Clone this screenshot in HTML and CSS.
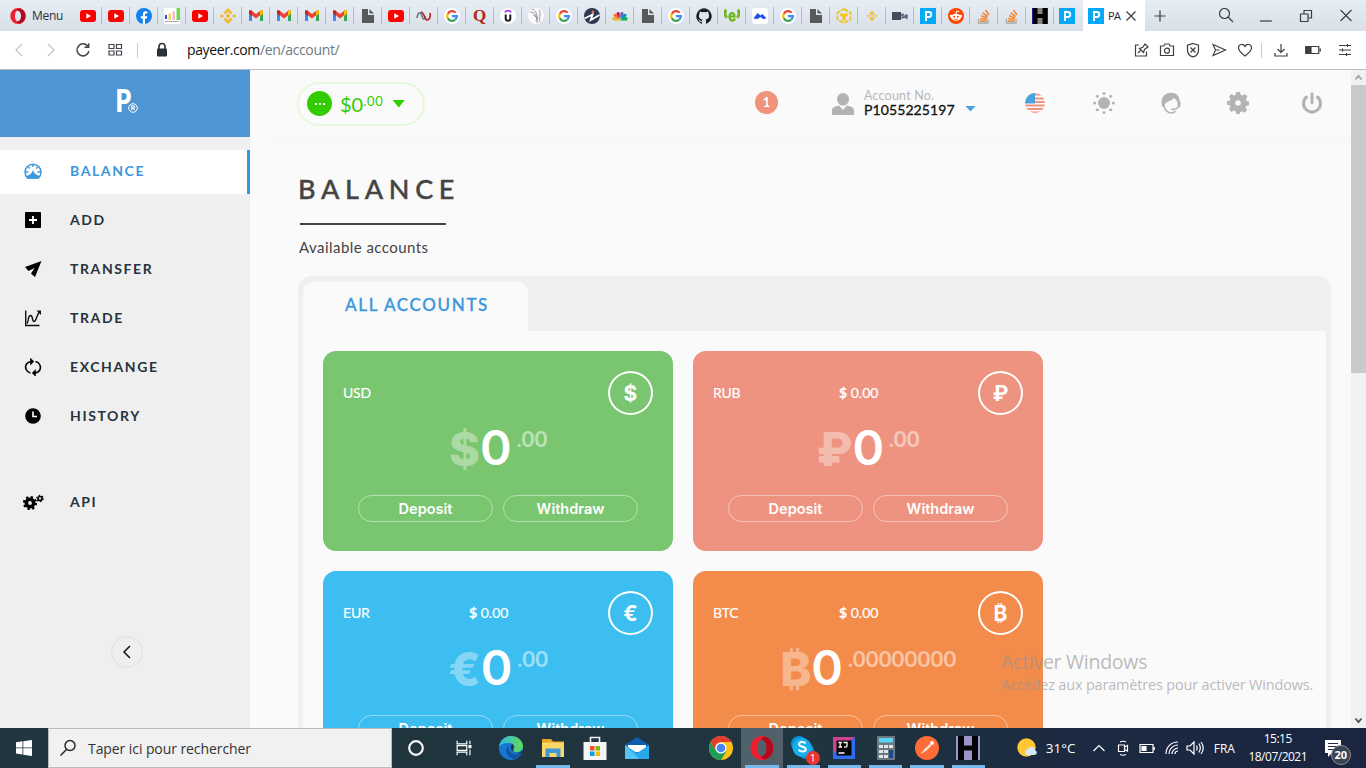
FILE: index.html
```html
<!DOCTYPE html>
<html lang="en">
<head>
<meta charset="utf-8">
<title>Payeer</title>
<link rel="stylesheet" href="styles.css">
</head>
<body>
<svg class="sprite" width="0" height="0">
  <symbol id="yt" viewBox="0 0 16 16"><rect y="2" width="16" height="12" rx="3" fill="#f00"/><path d="M6.3 5.2v5.6L11 8z" fill="#fff"/></symbol>
  <symbol id="fb" viewBox="0 0 16 16"><circle cx="8" cy="8" r="8" fill="#1082ee"/><path d="M6.8 16v-5.500H4.800V8.200h2V6.500c0-2.200 1.200-3.200 3-3.200l1.600.1v2h-1.100c-1 0-1.300.5-1.300 1.200v1.600h2.300l-.4 2.300H9V16z" fill="#fff"/></symbol>
  <symbol id="chart" viewBox="0 0 16 16"><rect width="16" height="16" fill="#fff"/><path d="M1 7h2v4H1z" fill="#234fd0"/><path d="M4.500 5.500H7V12H4.500z" fill="#fbd35b"/><path d="M8.500 3.500H11V12H8.500z" fill="#f2bac8"/><path d="M12.500 0H16v12h-3.500z" fill="#72d94c"/><path d="M1 13.500h14" stroke="#8c86bd" stroke-dasharray="1.500 .5"/></symbol>
  <symbol id="bnb" viewBox="0 0 16 16"><g fill="#f3ba2f"><path d="M8 0l4.500 4.500-1.900 1.900L8 3.800 5.400 6.400 3.500 4.500zM8 16l4.500-4.500-1.900-1.900L8 12.200 5.400 9.600l-1.900 1.900zM2 6l2 2-2 2-2-2zM14 6l2 2-2 2-2-2zM8 5.600L10.400 8 8 10.400 5.600 8z"/></g></symbol>
  <symbol id="gm" viewBox="0 0 16 16"><path d="M1 3.500V13h3V7z" fill="#4285f4"/><path d="M15 3.500V13h-3V7z" fill="#34a853"/><path d="M1 5V3.500C1 2 3 2 4 3l4 3 4-3c1-1 3-1 3 .5V5l-7 5.500z" fill="#ea4335"/><path d="M12 3c1-1 3-1 3 .5V5.500L12 8z" fill="#fbbc04"/><path d="M1 3.500C1 2 3 2 4 3v5L1 5.500z" fill="#c5221f"/></symbol>
  <symbol id="doc" viewBox="0 0 16 16"><path d="M2 1h6v6h6v8H2z" fill="#58595b"/><path d="M9.500 1L14 5.500H9.500z" fill="#58595b"/></symbol>
  <symbol id="gg" viewBox="0 0 16 16"><circle cx="8" cy="8" r="8" fill="#fff"/><g fill="none" stroke-width="2.300"><path d="M11.600 4.700A4.900 4.900 0 0 0 3.700 5.700" stroke="#ea4335"/><path d="M3.700 5.700a4.900 4.900 0 0 0 0 4.600" stroke="#fbbc05"/><path d="M3.700 10.300a4.900 4.900 0 0 0 7.700 1.200" stroke="#34a853"/><path d="M11.400 11.500A4.800 4.800 0 0 0 12.900 8.200H8" stroke="#4285f4"/></g></symbol>
  <symbol id="pp" viewBox="0 0 16 16"><rect width="16" height="16" fill="#04a8f5"/><path d="M6 13V4h2.800a2.500 2.500 0 0 1 0 5H6" fill="none" stroke="#fff" stroke-width="1.900"/></symbol>
  <symbol id="so" viewBox="0 0 16 16"><path d="M2.500 11v4h9.500v-4" fill="none" stroke="#aaa" stroke-width="1.300"/><path d="M4 13h6.500M4.200 10.500l6.400.9M5 7.700l6 2.300M6.700 4.900l5 3.700M9.500 2l3.500 5" stroke="#f48024" stroke-width="1.400"/></symbol>
  <symbol id="hh" viewBox="0 0 16 16"><rect width="16" height="16" fill="#000"/><path d="M5.500 0h5v6h-5zM5.500 10h5v6h-5z" fill="#858585"/><path d="M.5 0v16M15.500 0v16" stroke="#1c1c80"/></symbol>
  <symbol id="op" viewBox="0 0 24 24"><path fill-rule="evenodd" d="M12 0a11.500 12 0 1 0 0 24 11.500 12 0 0 0 0-24zm0 3.800c3 0 4.600 3.500 4.600 8.200S15 20.200 12 20.200 7.400 16.700 7.400 12 9 3.800 12 3.800z" fill="#f01c30"/><path d="M15.500 .8c10.500 3.700 10.500 18.700 0 22.400-2 .6-4-.8-4.500-3.200 7.500 1 7.500-17 0-16 .5-2.400 2.500-3.800 4.500-3.200z" fill="#b20a1c"/></symbol>
</svg>

<header class="tabs">
  <div class="menu"><svg width="16" height="16"><use href="#op"/></svg><span>Menu</span></div>
  <div class="tab"><svg><use href="#yt"/></svg></div>
  <div class="tab"><svg><use href="#yt"/></svg></div>
  <div class="tab"><svg><use href="#fb"/></svg></div>
  <div class="tab"><svg><use href="#chart"/></svg></div>
  <div class="tab"><svg><use href="#yt"/></svg></div>
  <div class="tab"><svg><use href="#bnb"/></svg></div>
  <div class="tab"><svg><use href="#gm"/></svg></div>
  <div class="tab"><svg><use href="#gm"/></svg></div>
  <div class="tab"><svg><use href="#gm"/></svg></div>
  <div class="tab"><svg><use href="#gm"/></svg></div>
  <div class="tab"><svg><use href="#doc"/></svg></div>
  <div class="tab"><svg><use href="#yt"/></svg></div>
  <div class="tab"><svg viewBox="0 0 16 16" fill="none" stroke-width="1.700"><path d="M1 10c1-7 4-6 5-2s3 4 3 0" stroke="#777"/><path d="M5 4c3 0 4 8 6 8s4-3 3-7" stroke="#ad2b2b"/></svg></div>
  <div class="tab"><svg><use href="#gg"/></svg></div>
  <div class="tab"><span class="glyph quora">Q</span></div>
  <div class="tab"><svg viewBox="0 0 16 16" fill="none"><circle cx="8" cy="8" r="8" fill="#fff"/><path d="M5 4.500C6 2 10 2 11 4.500" stroke="#a435f0" stroke-width="1.700"/><path d="M5.700 6.500v4.200c0 2.600 4.600 2.600 4.600 0V6.500" stroke="#1c1d1f" stroke-width="2"/></svg></div>
  <div class="tab"><svg viewBox="0 0 16 16" fill="none" stroke="#999"><circle cx="8" cy="8" r="8" fill="#fafafa" stroke="none"/><path d="M4 1c4 2 6 5 5 14M2 4c5 0 8 5 6 9M11 2c3 5-1 8 1 12M5 7l5 3"/></svg></div>
  <div class="tab"><svg><use href="#gg"/></svg></div>
  <div class="tab"><svg viewBox="0 0 16 16"><circle cx="8" cy="8" r="8" fill="#303750"/><path d="M.5 10.500L8.500 6.500 6.800 12 15.500 7" fill="none" stroke="#fff" stroke-width="1.900"/><circle cx="8.800" cy="3.700" r="1.300" fill="#f47c5b"/></svg></div>
  <div class="tab"><svg viewBox="0 0 16 16"><path d="M8 12.500H1C-1 9 3 7 8 12.500z" fill="#f5b21a"/><path d="M7.500 11.500L1.500 8C1 5 5 4 7.500 11.500z" fill="#f37021"/><path d="M7.700 11L4.500 6c0-3 3.500-2.500 3.200 0z" fill="#cc0f4b"/><path d="M8.300 11V6c0-2.500 3.500-3 3.200 0z" fill="#6460aa"/><path d="M8.500 11.500C11 4 15 5 14.500 8z" fill="#0089d0"/><path d="M8 12.500c5-5.500 9-3.500 7 0z" fill="#0db14b"/></svg></div>
  <div class="tab"><svg><use href="#doc"/></svg></div>
  <div class="tab"><svg><use href="#gg"/></svg></div>
  <div class="tab"><svg viewBox="0 0 16 16"><path d="M8 .2a8 8 0 0 0-2.500 15.500c.4.100.5-.2.500-.4v-1.500c-2.300.500-2.700-.9-2.700-.9-.3-.9-.9-1.200-.9-1.200-.7-.5.100-.5.100-.5.800.1 1.200.8 1.200.8.700 1.300 1.900.9 2.300.7.100-.5.300-.9.500-1.100-1.800-.2-3.600-.9-3.600-4 0-.9.300-1.600.8-2.100-.1-.2-.4-1 .1-2.100 0 0 .7-.2 2.200.8a7.500 7.500 0 0 1 4 0c1.500-1 2.200-.8 2.200-.8.500 1.100.2 1.900.1 2.100.5.600.8 1.300.8 2.100 0 3.100-1.900 3.800-3.700 4 .3.300.6.800.6 1.500v2.200c0 .2.100.5.500.4A8 8 0 0 0 8 .2z" fill="#1b1f23"/></svg></div>
  <div class="tab"><svg viewBox="0 0 16 16" fill="none" stroke="#6cb518"><path d="M5.500 8.500h5c0-4.500-5-4.500-5 0s4 5.500 5.500 2" stroke-width="2.200"/><path d="M2.500 2C0 3.500 .5 8 3 9.500M13.500 2c2.500 1.500 2 6-.5 7.500" stroke-width="2.800"/></svg></div>
  <div class="tab"><svg viewBox="0 0 16 16"><rect width="16" height="16" rx="3" fill="#fff"/><path d="M1.500 10.500L5.500 5 8.500 7.500 10.500 6l4 4.500-3.500 .5L8.500 9l-3 2z" fill="#1652f0"/></svg></div>
  <div class="tab"><svg><use href="#gg"/></svg></div>
  <div class="tab"><svg><use href="#doc"/></svg></div>
  <div class="tab"><svg viewBox="0 0 16 16" fill="none" stroke="#f5c21e"><path d="M8 1l6.500 3.500v7L8 15l-6.500-3.500v-7z" stroke-width="1.800" stroke-dasharray="4.500 1.200"/><path d="M4.500 6L8 8l3.500-2M8 8v4.500" stroke-width="3"/></svg></div>
  <div class="tab"><svg viewBox="-4 -4 24 24"><use href="#bnb" width="16" height="16"/></svg></div>
  <div class="tab"><svg viewBox="0 0 16 16"><rect y="4" width="9" height="8" fill="#474b5e"/><path d="M12 6.500c-3-1-3 1-1 1.500s1 2.500-2 1.500M13 8.500h2.500c0-2-2.500-2-2.500 0s2 2 2.500 1" fill="none" stroke="#666b7a" stroke-width="1.500"/></svg></div>
  <div class="tab"><svg><use href="#pp"/></svg></div>
  <div class="tab"><svg viewBox="0 0 16 16"><circle cx="8" cy="8" r="8" fill="#ff4500"/><ellipse cx="8" cy="9.300" rx="5" ry="3.500" fill="#fff"/><circle cx="3.200" cy="8" r="1.300" fill="#fff"/><circle cx="12.800" cy="8" r="1.300" fill="#fff"/><path d="M8 6l.7-3 2.500.6" fill="none" stroke="#fff"/><circle cx="6.200" cy="8.700" r="1" fill="#ff4500"/><circle cx="9.800" cy="8.700" r="1" fill="#ff4500"/><path d="M6 10.800c1 1 3 1 4 0" fill="none" stroke="#ff4500" stroke-width=".8"/></svg></div>
  <div class="tab"><svg><use href="#so"/></svg></div>
  <div class="tab"><svg><use href="#so"/></svg></div>
  <div class="tab"><svg><use href="#hh"/></svg></div>
  <div class="tab last"><svg><use href="#pp"/></svg></div>
  <div class="tab active"><svg><use href="#pp"/></svg><span class="tabname">PA</span><svg class="x" viewBox="0 0 16 16"><path d="M3.500 3.500l9 9M12.500 3.500l-9 9" stroke="#3c4043" stroke-width="1.300"/></svg></div>
  <svg class="plus" viewBox="0 0 16 16"><path d="M8 2.500v11M2.500 8h11" stroke="#3c4043" stroke-width="1.200"/></svg>
  <div class="winctl">
    <svg viewBox="0 0 16 16" fill="none" stroke="#3c4043" stroke-width="1.200"><circle cx="6.500" cy="5.500" r="5"/><path d="M10 9l5 5"/></svg>
    <svg viewBox="0 0 16 16"><path d="M2 13h12" stroke="#3c4043" stroke-width="1.200"/></svg>
    <svg viewBox="0 0 16 16" fill="none" stroke="#3c4043" stroke-width="1.200"><path d="M2.500 6h7.500v7.500H2.500zM6 6V2.500h7.500V10H10"/></svg>
    <svg viewBox="0 0 16 16"><path d="M2.500 2l11 11M13.500 2l-11 11" stroke="#3c4043" stroke-width="1.200"/></svg>
  </div>
</header>

<nav class="toolbar">
  <div class="navicons">
    <svg viewBox="0 0 16 16" fill="none" stroke="#c4c6c9" stroke-width="1.300"><path d="M11 2L5 8l6 6"/></svg>
    <svg viewBox="0 0 16 16" fill="none" stroke="#c4c6c9" stroke-width="1.300"><path d="M5 2l6 6-6 6"/></svg>
    <svg viewBox="0 0 16 16" fill="none" stroke="#41464d" stroke-width="1.500"><path d="M13 4.500a6 6 0 1 0 .9 4.500M13.700 1.200v4H9.500"/></svg>
    <svg viewBox="0 0 16 16" fill="none" stroke="#41464d" stroke-width="1.200"><path d="M2 2.500h5v4H2zM9.500 2.500h5v4h-5zM2 9h5v4H2zM9.500 9h5v4h-5z"/></svg>
  </div>
  <i class="rule"></i>
  <svg class="lock" viewBox="0 0 16 16"><rect x="3" y="6.500" width="10" height="8" rx="1" fill="#28323a"/><path d="M5 7V4.500a3 3 0 0 1 6 0V7" fill="none" stroke="#28323a" stroke-width="1.600"/></svg>
  <div class="url">payeer.com<span>/en/account/</span></div>
  <div class="tools">
    <svg viewBox="0 0 16 16"><path d="M6 3H2.500v11h11V9.500M5 11l3-3M6 6l5 5M7 6.500l3-1.500 2-3 3 3-3 2-1.500 3"/></svg>
    <svg viewBox="0 0 16 16"><path d="M1.500 4h3.300L6 2h4l1.200 2h3.300v9.500h-13z"/><circle cx="8" cy="8.700" r="2.500"/></svg>
    <svg viewBox="0 0 16 16"><path d="M8 1.500l5.500 1.700v5C13.500 11.500 11 14 8 14.800 5 14 2.500 11.500 2.500 8.200v-5zM5.500 5.500l5 5M10.500 5.500l-5 5"/></svg>
    <svg viewBox="0 0 16 16"><path d="M2 2.500L14.500 8 2 13.500 4.500 8zM4.500 8h4"/></svg>
    <svg viewBox="0 0 16 16"><path d="M8 14C4 11 1.500 8.500 1.500 5.700 1.500 2 6.500 1.200 8 4.500c1.500-3.300 6.500-2.500 6.500 1.200C14.500 8.500 12 11 8 14z"/></svg>
    <i class="rule"></i>
    <svg viewBox="0 0 16 16"><path d="M8 2v8.500M4.500 7L8 10.500 11.500 7M2 11v3h12v-3"/></svg>
    <svg viewBox="0 0 16 16"><path d="M.8 4.500h13v7H.8zM15.300 6.500v3"/><path d="M1 5h5v6H1z" fill="#3c4043"/></svg>
    <svg viewBox="0 0 16 16"><path d="M2 3.500h12M2 8h12M2 12.500h12M10.500 2v3M5.500 6.500v3M9.500 11v3"/></svg>
  </div>
</nav>

<div class="page">
  <aside class="side">
    <div class="logo"><span>P</span><svg width="10" height="10" viewBox="0 0 10 10" fill="none" stroke="#fff"><circle cx="5" cy="5" r="4.300" stroke-width="1"/><path d="M3.800 7.300V2.800h1.700a1.100 1.100 0 0 1 0 2.300H3.800M5.500 5.100l1 2.200" stroke-width="1.100"/></svg></div>
    <ul class="nav">
      <li class="on"><svg viewBox="0 0 18 18" fill="none" stroke="#3c97dc"><path d="M3.500 16a8 8 0 1 1 11 0z" stroke-width="1.500"/><path d="M2.500 14c3-1.500 4.500-1 6.500-6 2 5 3.500 4.500 6.500 6l-1 2.500h-11z" fill="#3c97dc" stroke="none"/><path d="M2 10h2.500M13.500 10H16M4.300 5l1.500 1.500M13.700 5l-1.500 1.500M9 2.500V5" stroke-width="1.500"/></svg><span>BALANCE</span></li>
      <li><svg viewBox="0 0 18 18"><rect x="1" y="1" width="16" height="16" rx="1" fill="#000"/><path d="M9 5v8M5 9h8" stroke="#fff" stroke-width="1.800"/></svg><span>ADD</span></li>
      <li><svg viewBox="0 0 18 18"><path d="M17.500 1L1 7l3.500 4 6-3-3.500 5.500 4 3.500z"/></svg><span>TRANSFER</span></li>
      <li><svg viewBox="0 0 18 18" fill="none" stroke="#111" stroke-width="1.400"><path d="M1.700 1.500v15H15.500M3 14.500c2-2 .5-8 3.500-8s1 6 3.500 6 2-5.500 5.500-9.500"/><path d="M12.500 1.500H17V6z" fill="#111" stroke="none"/></svg><span>TRADE</span></li>
      <li><svg viewBox="0 0 18 18" fill="none" stroke="#000" stroke-width="1.600"><path d="M6.500 15A6 6 0 0 1 2.500 6c1-1.700 2.500-2.300 5-2.500M11.500 3.500a6 6 0 0 1 4 9c-1 1.700-2.500 2.300-5 2.500"/><path d="M7 1.500l2 2-2 2zM11 13l-2 2 2 2z" fill="#000"/></svg><span>EXCHANGE</span></li>
      <li><svg viewBox="0 0 18 18"><circle cx="9" cy="9" r="7.800"/><path d="M9 4.500V9.500h4" fill="none" stroke="#fff" stroke-width="1.600"/></svg><span>HISTORY</span></li>
      <li class="api"><svg class="wide" viewBox="0 0 22 18" fill="none" stroke="#000"><circle cx="8" cy="10" r="3.700" stroke-width="3.600"/><circle cx="8" cy="10" r="6" stroke-width="2.200" stroke-dasharray="2.300 2.410"/><circle cx="18" cy="5.500" r="2" stroke-width="1.700"/><circle cx="18" cy="5.500" r="3.200" stroke-width="1.200" stroke-dasharray="1.500 1.850"/></svg><span>API</span></li>
    </ul>
    <button class="fold"><svg width="14" height="14" viewBox="0 0 14 14" fill="none" stroke="#111" stroke-width="1.500"><path d="M10 1L4 7l6 6"/></svg></button>
  </aside>

  <main class="main">
    <div class="top">
      <div class="pill"><i class="dots"><b></b><b></b><b></b></i><span class="amt">$0</span><span class="cents">.00</span><i class="tri"></i></div>
      <div class="note">1</div>
      <svg class="user" viewBox="0 0 22 22" fill="#b3b3b3"><ellipse cx="11" cy="6.300" rx="6" ry="6.300"/><path d="M0 22v-5c0-2.500 3-3.500 7-4.500l4 4.500 4-4.500c4 1 7 2 7 4.500v5z"/></svg>
      <div class="acct"><small>Account No.</small><span>P1055225197</span></div>
      <i class="tri blue"></i>
      <div class="hicons">
        <svg viewBox="0 0 22 22"><clipPath id="c"><circle cx="11" cy="11" r="10"/></clipPath><g clip-path="url(#c)"><path d="M0 2.500h22M0 6.500h22M0 10h22M0 13.500h22M0 17h22M0 20.500h22" stroke="#f0937e" stroke-width="1.900"/><path d="M0 0h11v11.500H0z" fill="#48a2df"/></g></svg>
        <svg viewBox="0 0 22 22" fill="#b3b3b3"><circle cx="11" cy="11" r="6"/><g><circle cx="11" cy="1.600" r="1.500"/><circle cx="11" cy="20.400" r="1.500"/><circle cx="1.600" cy="11" r="1.500"/><circle cx="20.400" cy="11" r="1.500"/><circle cx="4.300" cy="4.300" r="1.500"/><circle cx="17.700" cy="4.300" r="1.500"/><circle cx="4.300" cy="17.700" r="1.500"/><circle cx="17.700" cy="17.700" r="1.500"/></g></svg>
        <svg viewBox="0 0 22 22" fill="none" stroke="#b3b3b3"><path d="M3 15C0 12 1 1 11 .8c7 0 8.500 5 8.500 8 1.500 1 1.500 5 0 6.500h-2c1-6-1.500-7-3.500-9.500C12 9 7 9 5 12c-.5 1-.5 2-.5 3.500z" fill="#b3b3b3" stroke="none"/><path d="M4 13c0 5 4 8 7.500 8 1.500 0 3-.5 4-2M19 14c-1 3-4 3.500-8 3.500" stroke-width="1.400"/></svg>
        <svg viewBox="0 0 22 22"><path fill="#b3b3b3" fill-rule="evenodd" d="M9 0h4l.6 2.800 1.900.8L18 2l2.500 2.700-1.600 2.400.7 1.900 2.400.5v3.700l-2.600.6-.8 1.800 1.500 2.400-2.600 2.700-2.300-1.500-2 .8L12.700 22H9.300l-.6-2.700-1.900-.8L4.500 20 2 17.500l1.500-2.400-.8-1.800L0 12.700V9.300l2.700-.5.8-1.900L2 4.500 4.500 2l2.300 1.600 1.900-.8zM11 8.200a2.800 2.800 0 1 0 0 5.600 2.800 2.800 0 0 0 0-5.600z"/></svg>
        <svg class="power" viewBox="0 0 22 22" fill="none" stroke="#b3b3b3" stroke-width="3" stroke-linecap="round"><path d="M5.500 5A8.500 8.500 0 1 0 16.500 5M11 1.800v9"/></svg>
      </div>
    </div>

    <section class="body">
      <h1>BALANCE</h1>
      <p class="sub">Available accounts</p>
      <div class="panel">
        <div class="ptabs"><div class="ptab">ALL ACCOUNTS</div></div>
        <div class="cards">
          <article class="card usd"><div class="row"><span>USD</span><em></em><i class="ring">$</i></div><div class="sum"><b class="cur">$</b><b class="zero">0</b><b class="dec">.00</b></div><div class="btns"><a>Deposit</a><a>Withdraw</a></div></article>
          <article class="card rub"><div class="row"><span>RUB</span><em><b>$</b> 0.00</em><i class="ring">₽</i></div><div class="sum"><b class="cur">₽</b><b class="zero">0</b><b class="dec">.00</b></div><div class="btns"><a>Deposit</a><a>Withdraw</a></div></article>
          <article class="card eur"><div class="row"><span>EUR</span><em><b>$</b> 0.00</em><i class="ring">€</i></div><div class="sum"><b class="cur">€</b><b class="zero">0</b><b class="dec">.00</b></div><div class="btns"><a>Deposit</a><a>Withdraw</a></div></article>
          <article class="card btc"><div class="row"><span>BTC</span><em><b>$</b> 0.00</em><i class="ring">₿</i></div><div class="sum"><b class="cur">₿</b><b class="zero">0</b><b class="dec">.00000000</b></div><div class="btns"><a>Deposit</a><a>Withdraw</a></div></article>
        </div>
      </div>
    </section>
  </main>
  <div class="scroll"><svg viewBox="0 0 15 15"><path d="M4.500 9.500l3-3.500 3 3.500" fill="none" stroke="#a3a3a3" stroke-width="1.800"/></svg><i></i><svg viewBox="0 0 15 15"><path d="M4.500 5.500l3 3.500 3-3.500" fill="none" stroke="#505050" stroke-width="1.800"/></svg></div>
  <div class="water"><div>Activer Windows</div><p>Accédez aux paramètres pour activer Windows.</p></div>
</div>

<footer class="task">
  <div class="start"><svg width="16" height="16" viewBox="0 0 16 16"><path d="M0 2.300L6.500 1.300v6.200H0zM7.300 1.200L16 0v7.500H7.300zM0 8.300h6.500v6.200L0 13.600zM7.300 8.300H16V16l-8.700-1.300z" fill="#fff"/></svg></div>
  <div class="find"><svg width="18" height="18" viewBox="0 0 18 18" fill="none" stroke="#222" stroke-width="1.400"><circle cx="11" cy="6.500" r="5"/><path d="M7.500 10.500L1.500 16.500"/></svg><span>Taper ici pour rechercher</span></div>
  <div class="t48"><svg viewBox="0 0 24 24"><circle cx="12" cy="12" r="6.800" fill="none" stroke="#f4f4f4" stroke-width="2.200"/></svg></div>
  <div class="t48"><svg viewBox="0 0 24 24" fill="none" stroke="#fff" stroke-width="1.300"><path d="M4.500 4v3.500H15V4M4.500 20v-3.500H15V20M4.500 9.500H15v5H4.500zM18.500 4v4M18.500 14v6"/><path d="M17.500 9.500h2v2h-2z" fill="#fff"/></svg></div>
  <div class="t42 edge"><svg viewBox="0 0 24 24"><defs><linearGradient id="eg" x1="0" x2="1"><stop offset="0" stop-color="#2cb5e8"/><stop offset="1" stop-color="#63dc55"/></linearGradient></defs><circle cx="12" cy="12" r="12" fill="#1577cf"/><path d="M0 11C1 4 6 0 12 0c7 0 12 5 12 10 0 4-3 6-6 6-4 0-4-1-3-3s0-6-5-6S1 9 0 11z" fill="url(#eg)"/><path d="M9 10c-4 5-1 12 7 13 3-.8 5-3 7-6-8 4-13 0-14-7z" fill="#12549e"/><path d="M13 8c4 2 0 5 1 7 1 3 7 3 9-1 l1 3c-8 2-15-3-11-9z" fill="#22363f"/></svg></div>
  <div class="t42 run"><svg viewBox="0 0 24 24"><path d="M1 3h9l2 2.500h11V21H1z" fill="#e9a820"/><path d="M1 6.500h22V21H1z" fill="#fdd766"/><path d="M4.500 21v-8.500h15V21h-4v-4h-7v4z" fill="#3f98d8"/></svg></div>
  <div class="t42"><svg viewBox="0 0 24 24"><path d="M7.500 7V1.500h9V7" fill="none" stroke="#eee" stroke-width="1.600"/><path d="M.5 6h23v18H.5z" fill="#f5f5f5"/><path d="M7 10h4.500v4.500H7z" fill="#f25022"/><path d="M12.500 10H17v4.500h-4.500z" fill="#7fba00"/><path d="M7 15.500h4.500V20H7z" fill="#00a4ef"/><path d="M12.500 15.500H17V20h-4.500z" fill="#ffb900"/></svg></div>
  <div class="t42"><svg viewBox="0 0 24 24"><path d="M0 9l12-8 12 8v14H0z" fill="#0c5fad"/><path d="M3 9h18v7H3z" fill="#fff"/><path d="M0 9l12 8 12-8v14H0z" fill="#29a9ea"/><path d="M0 9l14 14H0z" fill="#52c7f5"/></svg></div>
  <div class="t42"></div>
  <div class="t41"><svg viewBox="0 0 24 24"><circle cx="12" cy="12" r="12" fill="#fbc116"/><path d="M1.600 6A12 12 0 0 0 12 24l5.500-9-5.500 2-5.500-3z" fill="#1f9d55"/><path d="M1.600 6A12 12 0 0 1 22.400 6H12a6 6 0 0 0-5.500 8z" fill="#e33b2e"/><circle cx="12" cy="12" r="5.500" fill="#fff"/><circle cx="12" cy="12" r="4.300" fill="#4285f4"/></svg></div>
  <div class="t41 run cur-app"><svg><use href="#op"/></svg></div>
  <div class="t41 run"><svg viewBox="0 0 24 24"><circle cx="8" cy="8" r="8" fill="#0a93d8"/><circle cx="15" cy="15" r="8" fill="#0a93d8"/><circle cx="11" cy="11.500" r="9.500" fill="#16b0ee"/><path d="M14.500 7.500c-1-2-6.500-2-6.500.8 0 3.200 6.800 1.700 6.800 5 0 3-6 2.800-7 .2" fill="none" stroke="#fff" stroke-width="2"/></svg><small class="bubble">1</small></div>
  <div class="t41 run"><svg viewBox="0 0 24 24"><rect x="1" y="1" width="22" height="22" fill="#2f6df0"/><path d="M1 1h22L1 17z" fill="#d0418f"/><rect x="4.500" y="4.500" width="15" height="15" fill="#050505"/><path d="M6.500 6.500h3.500M8.200 6.500v4.500M6.500 11H10M11.500 6.500H15V10c0 1-1.500 1.300-3 .8M6.500 17h6" fill="none" stroke="#fff" stroke-width="1.300"/></svg></div>
  <div class="t41 run"><svg viewBox="0 0 24 24"><rect x="3" width="18" height="24" fill="#6d7880"/><path d="M5 2h14v4.500H5z" fill="#5ad4f8"/><path d="M5 9h4v3H5zM10 9h4v3h-4zM15 9h4v3h-4zM5 14h4v3H5zM10 14h4v3h-4zM5 19h4v3H5zM10 19h4v3h-4z" fill="#dfe5e8"/><path d="M15 14h4v8h-4z" fill="#164a92"/></svg></div>
  <div class="t41 run"><svg viewBox="0 0 24 24"><circle cx="12" cy="12" r="12" fill="#ff6c37"/><path d="M5.500 18l4-5 5.500-5 1.500 1.500-5 5z" fill="#fff" fill-opacity=".85"/><circle cx="17" cy="7" r="1.900" fill="#fff"/></svg></div>
  <div class="t41 run"><svg viewBox="0 0 24 24"><rect width="24" height="24" fill="#9a96ca"/><path d="M2 0h6v24H2zM16 0h6v24h-6zM7 9.500h10v5H7z" fill="#050505"/></svg></div>
  <div class="tray">
    <svg class="sun" viewBox="0 0 20 20"><circle cx="9.500" cy="9.500" r="9.200" fill="#ffc734"/><path d="M9 17c-3-5 2-6 3-7 3-3 6 0 6 2 3 2 2 5-1 5z" fill="#d4e9fb"/></svg>
    <span class="temp">31°C</span>
    <svg class="g1" viewBox="0 0 16 16"><path d="M2.500 11L8 5.500l5.500 5.500"/></svg>
    <svg class="g2" viewBox="0 0 16 16"><path d="M3.500 5h6v6.500h-6zM9.500 7l3-1.500V11l-3-1.500M5 2c2-1 4-1 6 0M5 14.500c2 1 4 1 6 0"/></svg>
    <svg class="g3" viewBox="0 0 16 16"><path d="M1 4.500h13v8H1zM15.300 7v3"/><path d="M3 6.500h4v4H3z" fill="#fff"/></svg>
    <svg class="g4" viewBox="0 0 16 16"><path d="M2 14C2 7 7 2 14 2M5 14c0-5 4-9 9-9M8 14c0-3 3-6 6-6M11 14c0-2 1-3 3-3"/></svg>
    <svg class="g5" viewBox="0 0 18 16"><path d="M1 6h3l4-4v12l-4-4H1zM10.500 5.500c1 2 1 3 0 5M12.800 3.500c2 3 2 6 0 9M15 2c3 4 3 8 0 12"/></svg>
    <span class="fra">FRA</span>
    <div class="clock"><span>15:15</span><span>18/07/2021</span></div>
    <div class="action"><svg width="17" height="17" viewBox="0 0 17 17"><path d="M0 0h16v13H7l-4 4v-4H0z" fill="#fff"/><path d="M3 3.500h10M3 6.500h10M3 9.500h6" stroke="#1b2a41" stroke-width="1.200"/></svg><b>20</b></div>
  </div>
</footer>
</body>
</html>
```
FILE: styles.css
```css
* { box-sizing: border-box; margin: 0; padding: 0; }
body { width: 1366px; height: 768px; overflow: hidden; font-family: Lato, "Liberation Sans", sans-serif; background: #fafafa; }
i, em { font-style: normal; }
.sprite { position: absolute; }
svg { flex: none; display: block; }

/* browser tabs */
.tabs { display: flex; height: 31px; background: linear-gradient(#e6edf4, #d8dfe7); align-items: center; }
.menu { width: 74px; padding-left: 10px; display: flex; gap: 6px; align-items: center; font: 12px "Open Sans", sans-serif; color: #333; letter-spacing: -.3px; }
.tab { width: 28px; height: 17px; border-right: 1px solid #b2bcc7; display: flex; align-items: center; justify-content: center; }
.tab svg { width: 16px; height: 16px; }
.tab.last { border: 0; width: 29px; padding-right: 3px; }
.glyph { font: bold 17px/16px "Liberation Serif", serif; color: #b0260f; }
.tab.active { width: 62px; height: 31px; background: #fff; border: 0; justify-content: flex-start; padding-left: 5px; }
.tabname { width: 13px; margin-left: 4px; font: 11px "Open Sans", sans-serif; color: #223; letter-spacing: -.6px; }
.tab .x { width: 16px; margin-left: 2px; }
.plus { width: 16px; height: 16px; margin-left: 7px; }
.winctl { display: flex; gap: 24px; margin-left: auto; padding-right: 12px; }
.winctl svg { width: 16px; height: 16px; }

.toolbar { display: flex; align-items: center; height: 39px; background: #fff; border-bottom: 1px solid #b5bec7; }
.navicons { display: flex; gap: 16px; padding-left: 11px; }
.navicons svg { width: 16px; height: 16px; }
.rule { width: 1px; height: 15px; background: #c8cbcf; }
.navicons + .rule { margin-left: 14px; }
.lock { width: 16px; height: 16px; margin-left: 16px; }
.url { margin-left: 17px; font: 14px/20px "Open Sans", sans-serif; letter-spacing: -.36px; color: #111; padding-bottom: 1px; }
.url span { color: #6d7a86; }
.tools { display: flex; gap: 10px; align-items: center; margin-left: auto; padding-right: 13px; }
.tools svg { width: 16px; height: 16px; fill: none; stroke: #3c4043; stroke-width: 1.200; }
.tools .rule { margin: 0 1px 0 -2px; }
.tools .rule ~ svg + svg { margin-left: 6px; }

/* page */
.page { position: relative; display: flex; height: 658px; overflow: hidden; }
.side { width: 250px; background: #efefef; display: flex; flex-direction: column; }
.logo { height: 67px; background: #4e95d3; display: flex; justify-content: center; color: #fff; padding-top: 12px; }
.logo span { font: bold 32px/36px "Open Sans", sans-serif; transform: scaleX(.86); transform-origin: right; }
.logo svg { margin-top: 21px; margin-left: -5px; }
.nav { list-style: none; padding-top: 13px; display: flex; flex-direction: column; gap: 5px; }
.nav li { height: 44px; display: flex; align-items: center; padding: 0 0 2px 24px; font-size: 14px; font-weight: 700; letter-spacing: 1.600px; color: #27333d; }
.nav svg { width: 18px; height: 18px; }
.nav span { margin-left: 28px; padding-bottom: 2px; }
.nav .on { background: #fff; color: #3c97dc; border-right: 3px solid #3498db; }
.nav .api { margin-top: 37px; padding-left: 22px; }
.nav .wide { width: 22px; }
.nav .api span { margin-left: 26px; }
.fold { width: 32px; height: 32px; margin: 111px 0 0 111px; border-radius: 50%; background: #efefef; border: 1px solid #e0e0e0; display: grid; place-items: center; }

.main { width: 1101px; background: #fafafa; }
.top { height: 67px; display: flex; align-items: center; padding: 0 0 1px 47px; box-shadow: 20px 8px 15px #f7f8f6; }
.pill { width: 128px; height: 44px; border: 2px solid #e3f8dc; border-radius: 22px; display: flex; align-items: center; padding-left: 8px; color: #3c0; margin-top: 1px; }
.dots { width: 25px; height: 25px; border-radius: 50%; background: #3c0; display: flex; gap: 2px; align-items: center; justify-content: center; }
.dots b { width: 2px; height: 2px; background: #fff; }
.amt { margin-left: 8px; font: 20px/26px Lato, sans-serif; }
.cents { font: 13px Lato, sans-serif; margin-top: -6px; letter-spacing: .7px; width: 21px; }
.tri { width: 13px; height: 8px; background: #3c0; clip-path: polygon(0 0, 100% 0, 50% 100%); margin-left: 8px; }
.note { width: 23px; height: 23px; border-radius: 50%; background: #f0937b; color: #fff; font: bold 13px/23px Lato, sans-serif; text-align: center; margin: -2px 0 0 330px; }
.user { width: 22px; height: 22px; margin-left: 54px; margin-top: 1px; }
.acct { margin-left: 10px; width: 92px; font-size: 14px; line-height: 14px; color: #111; white-space: nowrap; letter-spacing: .1px; -webkit-text-stroke: .3px #111; }
.acct small { display: block; font-size: 12.500px; color: #b8b8b8; letter-spacing: .2px; -webkit-text-stroke: 0; }
.tri.blue { background: #48a2df; width: 11px; height: 6px; margin: 11px 0 0 9px; }
.hicons { display: flex; gap: 45px; margin-left: 48px; }
.hicons svg { width: 22px; height: 22px; }
.hicons svg:first-child { margin-right: 2px; }
.hicons .power { margin-left: 7px; }

.body { padding: 38px 20px 0 48px; }
h1 { font: 500 27px/28px Lato, sans-serif; letter-spacing: 5.700px; color: #444; -webkit-text-stroke: .4px #444; padding-bottom: 19px; }
h1::after { content: ""; display: block; width: 146px; height: 2px; background: #444; margin: 20px 0 0 2px; }
.sub { font-size: 15px; line-height: 18px; color: #444; margin: -6px 0 0 1px; letter-spacing: .45px; }
.panel { margin-top: 20px; width: 1033px; height: 500px; border: 5px solid #efefef; border-radius: 13px 13px 0 0; }
.ptabs { background: #efefef; padding-top: 1px; }
.ptab { width: 225px; height: 49px; background: #fafafa; border-radius: 10px 10px 0 0; font: 500 17px/45px Lato, sans-serif; letter-spacing: 1.650px; color: #3c97dc; -webkit-text-stroke: .3px #3c97dc; text-align: center; padding-left: 3px; }
.cards { padding: 20px; display: grid; grid-template-columns: 350px 350px; grid-auto-rows: 200px; gap: 20px; }
.card { border-radius: 13px; color: #fff; padding: 20px; }
.usd { background: #79c570; } .rub { background: #ee937f; } .eur { background: #3dbef0; } .btc { background: #f38b4a; }
.row { display: grid; grid-template-columns: 125px 1fr 45px; align-items: center; height: 44px; font-size: 14px; }
.row span, .row em { padding-bottom: 2px; letter-spacing: -.2px; -webkit-text-stroke: .2px #fff; }
.row em { padding-left: 1px; letter-spacing: 0; }
.ring { width: 45px; height: 44px; border: 2px solid #fff; border-radius: 50%; font: bold 21px/41px Inter, "Open Sans", "DejaVu Sans", sans-serif; text-align: center; }
.sum { display: flex; justify-content: center; height: 68px; }
.cur { font: 800 47px/68px Inter, "DejaVu Sans", sans-serif; color: rgba(255,255,255,.4); margin-right: 1px; }
.zero { font: 600 48px/66px Inter, sans-serif; margin-left: -1px; }
.dec { font: 600 21px/50px Inter, sans-serif; letter-spacing: -.9px; color: rgba(255,255,255,.5); margin-left: 4px; }
.btns { display: flex; gap: 10px; justify-content: center; padding-top: 12px; }
.btns a { width: 135px; height: 27px; border: 1px solid rgba(255,255,255,.45); border-radius: 14px; font: 600 14.500px/26px Inter, sans-serif; letter-spacing: 0; text-align: center; }

.scroll { width: 15px; background: #f1f1f1; display: flex; flex-direction: column; }
.scroll svg { width: 15px; height: 15px; }
.scroll i { height: 288px; background: #c9c9c9; margin-bottom: auto; }
.water { position: absolute; left: 1001px; top: 579px; font-family: "Open Sans", sans-serif; color: rgba(150,150,150,.65); white-space: nowrap; }
.water div { font-size: 19.500px; line-height: 26px; letter-spacing: -.27px; }
.water p { font-size: 14.500px; line-height: 20px; letter-spacing: -.18px; }

/* taskbar */
.task { display: flex; height: 40px; background: linear-gradient(90deg, #22363f, #20343f 60%, #1b2941 80%, #1a2540); color: #fff; font-family: "Open Sans", sans-serif; }
.start { width: 48px; display: grid; place-items: center; }
.find { width: 344px; background: #f1f1f1; border: 1px solid #bbb; display: flex; align-items: center; gap: 11px; padding-left: 10px; font-size: 14px; letter-spacing: -.08px; color: #333; }
.t48, .t42, .t41 { width: 48px; position: relative; display: grid; place-items: center; flex: none; }
.t42 { width: 42px; } .t41 { width: 41.250px; }
.t42.edge { margin-left: 2px; }
.t48 svg, .t42 svg, .t41 svg { width: 24px; height: 24px; }
.t48:nth-child(4) svg { width: 22px; }
.run { border-bottom: 3px solid #76b9ed; border-left: 4px solid transparent; border-right: 4px solid transparent; padding-top: 3px; border-image: linear-gradient(90deg, transparent 4px, #76b9ed 4px, #76b9ed calc(100% - 4px), transparent calc(100% - 4px)) 0 4 3 4; }
.cur-app { background: #50616b; }
.bubble { position: absolute; right: 0; bottom: 0; width: 14px; height: 14px; border-radius: 50%; background: #e8372c; font-size: 10px; line-height: 14px; text-align: center; }
.tray { flex: 1; position: relative; display: flex; align-items: center; font-size: 12px; padding-left: 28px; }
.tray svg { width: 16px; height: 16px; fill: none; stroke: #fff; stroke-width: 1.200; }
.tray .sun { width: 20px; height: 20px; stroke: none; }
.temp { font-size: 13.500px; margin-left: 9px; width: 45px; }
.tray .g2 { margin-left: 8px; } .tray .g3 { margin-left: 8px; } .tray .g4 { margin-left: 9px; } .tray .g5 { width: 18px; margin-left: 6px; }
.fra { margin-left: 10px; width: 34px; }
.clock { display: flex; flex-direction: column; align-items: center; width: 60px; line-height: 18px; white-space: nowrap; letter-spacing: -.5px; }
.action { position: relative; margin-left: 17px; }
.action svg { width: 17px; height: 17px; stroke: none; }
.action b { position: absolute; left: 6px; top: 5px; width: 20px; height: 20px; border-radius: 50%; background: #3a4350; border: 1px solid #8a9098; font-size: 11px; line-height: 18px; text-align: center; }
```
